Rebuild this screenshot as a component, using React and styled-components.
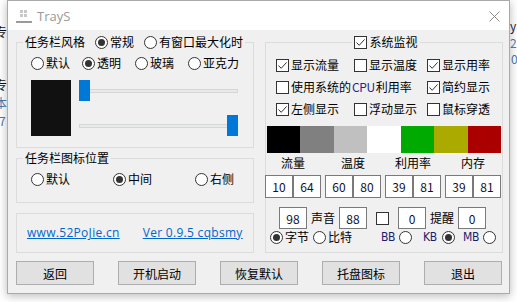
import React from "react";
import styled, { createGlobalStyle } from "styled-components";

const GlobalStyle = createGlobalStyle`
  html, body {
    margin: 0;
    padding: 0;
    background: #fff;
  }
  body {
    width: 517px;
    height: 302px;
    overflow: hidden;
    font-family: "Noto Sans CJK SC", "Noto Sans", sans-serif;
    font-size: 12px;
    color: #000;
  }
`;

const Desktop = styled.div`
  display: flex;
  align-items: flex-start;
  width: 517px;
  height: 302px;
  overflow: hidden;
`;

const Strip = styled.div`
  flex: none;
  width: 7px;
  height: 302px;
  overflow: hidden;
  display: flex;
  flex-direction: column;
`;

const StripLine = styled.div`
  white-space: nowrap;
  line-height: 13px;
  height: 13px;
  font-size: 12px;
  margin-top: ${(p) => p.$mt}px;
  margin-left: ${(p) => p.$ml}px;
  color: ${(p) => p.$color};
`;

const Window = styled.div`
  flex: none;
  position: relative;
  z-index: 1;
  width: 503px;
  height: 294px;
  box-sizing: border-box;
  border: 1px solid #aaaaaa;
  background: #f0f0f0;
  box-shadow: 0 2px 9px rgba(0, 0, 0, 0.28);
  display: flex;
  flex-direction: column;
`;

const TitleBar = styled.div`
  height: 29px;
  flex: none;
  background: #fff;
  display: flex;
  align-items: center;
  padding: 0 9px 0 8px;
`;

const Title = styled.span`
  margin-left: 5px;
  font-family: "Open Sans", "Noto Sans", sans-serif;
  font-size: 13px;
  color: #9a9a9a;
`;

const CloseBtn = styled.svg`
  margin-left: auto;
  margin-top: 1px;
`;

const Body = styled.div`
  flex: 1;
  padding: 12px 6px 0 8px;
  display: flex;
  flex-direction: column;
`;

const Panels = styled.div`
  display: flex;
  gap: 11px;
  height: 211px;
`;

const Column = styled.div`
  width: 238px;
  display: flex;
  flex-direction: column;
  gap: 10px;
`;

const Group = styled.div`
  position: relative;
  box-sizing: border-box;
  width: 238px;
  height: ${(p) => p.$h}px;
  border: 1px solid #dcdcdc;
  padding: ${(p) => p.$pad};
  display: flex;
  flex-direction: column;
`;

const LegendBar = styled.div`
  position: absolute;
  top: -9px;
  left: ${(p) => (p.$center ? 0 : 6)}px;
  right: ${(p) => (p.$center ? 0 : "auto")};
  display: flex;
  justify-content: ${(p) => (p.$center ? "center" : "flex-start")};
`;

const Legend = styled.div`
  display: flex;
  align-items: center;
  gap: 10px;
  height: 16px;
  line-height: 16px;
  padding: 0 2px;
  margin-left: ${(p) => p.$ml || 0}px;
  background: #f0f0f0;
`;

const RadioLabel = styled.label`
  flex: none;
  display: inline-flex;
  align-items: center;
  gap: 2px;
  height: 16px;
  line-height: 16px;
  width: ${(p) => (p.$w ? `${p.$w}px` : "auto")};
`;

const RadioCircle = styled.span`
  flex: none;
  width: 13px;
  height: 13px;
  box-sizing: border-box;
  border: 1px solid #333;
  border-radius: 50%;
  background: #fff;
  display: flex;
  align-items: center;
  justify-content: center;
  &::after {
    content: "";
    width: 7px;
    height: 7px;
    border-radius: 50%;
    background: #333;
    display: ${(p) => (p.$on ? "block" : "none")};
  }
`;

const CheckLabel = styled.label`
  display: inline-flex;
  align-items: center;
  gap: 2px;
  height: 16px;
  line-height: 16px;
  white-space: nowrap;
  grid-column: ${(p) => (p.$span ? `span ${p.$span}` : "auto")};
`;

const CheckBox = styled.span`
  flex: none;
  width: 13px;
  height: 13px;
  box-sizing: border-box;
  border: 1px solid #333;
  background: #fff;
  display: flex;
  align-items: center;
  justify-content: center;
  margin-left: ${(p) => p.$ml || 0}px;
`;

const Latin = styled.span`
  color: #1d2a8c;
  letter-spacing: -0.4px;
  margin: 0 -1px;
`;

const RadioRow = styled.div`
  display: flex;
  align-items: center;
  height: 16px;
`;

const SwatchBlock = styled.div`
  display: flex;
  gap: 8px;
  margin-top: 9px;
`;

const BigSwatch = styled.div`
  width: 40px;
  height: 56px;
  background: #111;
`;

const Sliders = styled.div`
  display: flex;
  flex-direction: column;
  gap: 14px;
`;

const SliderBox = styled.div`
  position: relative;
  width: 159px;
  height: 21px;
`;

const Track = styled.div`
  position: absolute;
  left: 0;
  right: 0;
  top: 9px;
  height: 4px;
  box-sizing: border-box;
  background: #e7eaea;
  border: 1px solid #d6d6d6;
`;

const Thumb = styled.div`
  position: absolute;
  top: 0;
  width: 11px;
  height: 21px;
  background: #0078d7;
`;

const LinkRow = styled.div`
  display: flex;
  align-items: center;
  gap: 23px;
  height: 16px;
`;

const Link = styled.a`
  font-family: "Open Sans", "Noto Sans", sans-serif;
  font-size: 12px;
  letter-spacing: 0.3px;
  line-height: 16px;
  color: #0066cc;
  text-decoration: underline;
  white-space: nowrap;
`;

const CheckGrid = styled.div`
  display: grid;
  grid-template-columns: 78px 73px auto;
  grid-auto-rows: 22px;
  align-items: center;
  margin: 11px 0 0 10px;
`;

const ColorStrip = styled.div`
  display: flex;
  height: 27px;
  margin: 6px 1px 0 1px;
`;

const ColorCell = styled.div`
  flex: 1;
  background: ${(p) => p.$c};
`;

const PairGrid = styled.div`
  display: grid;
  grid-template-columns: repeat(4, 56px);
  column-gap: 4px;
  margin: ${(p) => p.$m};
`;

const PairLabel = styled.div`
  text-align: center;
  line-height: 16px;
  height: 16px;
`;

const Pair = styled.div`
  display: flex;
`;

const NumBox = styled.div`
  flex: none;
  width: 28px;
  height: ${(p) => p.$h}px;
  box-sizing: border-box;
  border: 1px solid #7a7a7a;
  background: #fff;
  display: flex;
  align-items: center;
  justify-content: center;
  margin-left: ${(p) => p.$ml || 0}px;
  font-size: 12px;
  color: #101030;
`;

const MiscRow = styled.div`
  display: flex;
  align-items: center;
  height: 22px;
  margin: 9px 0 0 13px;
`;

const Word = styled.span`
  margin-left: ${(p) => p.$ml || 0}px;
  line-height: 16px;
`;

const UnitRow = styled.div`
  display: flex;
  align-items: center;
  height: 16px;
  padding: 0 6px 0 4px;
`;

const UnitItem = styled.label`
  display: flex;
  align-items: center;
  justify-content: space-between;
  width: ${(p) => p.$w}px;
  margin-left: ${(p) => (p.$ml === "auto" ? "auto" : `${p.$ml}px`)};
`;

const UnitText = styled.span`
  font-family: "Liberation Sans Narrow", "DejaVu Sans Condensed", "Liberation Sans", sans-serif;
  font-size: 12px;
  letter-spacing: -0.3px;
  color: #1c1c6e;
`;

const ButtonRow = styled.div`
  display: flex;
  justify-content: space-between;
  width: 486px;
  margin-top: 8px;
`;

const Button = styled.button`
  width: 78px;
  height: 24px;
  box-sizing: border-box;
  border: 1px solid #adadad;
  background: #e1e1e1;
  font-family: "Noto Sans CJK SC", sans-serif;
  font-size: 12px;
  color: #000;
  padding: 0;
`;

const Radio = ({ on, children, w }) => (
  <RadioLabel $w={w}>
    <RadioCircle $on={on} />
    {children}
  </RadioLabel>
);

const Tick = () => (
  <svg width="11" height="11" viewBox="0 0 11 11">
    <polyline points="1.5,5.5 4.2,8.3 9.6,2.4" fill="none" stroke="#333" strokeWidth="1" />
  </svg>
);

const Check = ({ on, children, span }) => (
  <CheckLabel $span={span}>
    <CheckBox>{on && <Tick />}</CheckBox>
    {children}
  </CheckLabel>
);

const Slider = ({ value }) => (
  <SliderBox>
    <Track />
    <Thumb style={{ left: Math.round(value * 148) }} />
  </SliderBox>
);

const colors = ["#000000", "#808080", "#c0c0c0", "#ffffff", "#00aa00", "#aaaa00", "#aa0000"];
const pairs = [
  ["流量", "10", "64"],
  ["温度", "60", "80"],
  ["利用率", "39", "81"],
  ["内存", "39", "81"],
];
const buttons = ["返回", "开机启动", "恢复默认", "托盘图标", "退出"];

export default function App() {
  return (
    <>
      <GlobalStyle />
      <Desktop>
        <Strip>
          <StripLine $mt={25} $ml={-5} $color="#111">专</StripLine>
          <StripLine $mt={40} $ml={-5} $color="#111">专</StripLine>
          <StripLine $mt={5} $ml={-5} $color="#4a78b0">本</StripLine>
          <StripLine $mt={5} $ml={-1} $color="#4a78b0">7</StripLine>
        </Strip>

        <Window>
          <TitleBar>
            <svg width="16" height="16" viewBox="0 0 16 16">
              <rect x="4" y="2" width="3" height="3" fill="#c8c8c8" />
              <rect x="8" y="2" width="3" height="3" fill="#c8c8c8" />
              <rect x="4" y="6" width="3" height="3" fill="#c8c8c8" />
              <rect x="8" y="6" width="3" height="3" fill="#c8c8c8" />
              <rect x="0" y="13" width="16" height="2" fill="#9a9a9a" />
            </svg>
            <Title>TrayS</Title>
            <CloseBtn width="11" height="11" viewBox="0 0 11 11">
              <path d="M0.5 0.5 L10.5 10.5 M10.5 0.5 L0.5 10.5" stroke="#8a8a8a" strokeWidth="1" />
            </CloseBtn>
          </TitleBar>

          <Body>
            <Panels>
              <Column>
                <Group $h={106} $pad="12px 0 0 14px">
                  <LegendBar>
                    <Legend>
                      <span>任务栏风格</span>
                      <Radio on>常规</Radio>
                      <Radio>有窗口最大化时</Radio>
                    </Legend>
                  </LegendBar>
                  <RadioRow>
                    <Radio w={51}>默认</Radio>
                    <Radio w={53} on>透明</Radio>
                    <Radio w={53}>玻璃</Radio>
                    <Radio>亚克力</Radio>
                  </RadioRow>
                  <SwatchBlock>
                    <BigSwatch />
                    <Sliders>
                      <Slider value={0} />
                      <Slider value={1} />
                    </Sliders>
                  </SwatchBlock>
                </Group>

                <Group $h={45} $pad="12px 0 0 14px">
                  <LegendBar>
                    <Legend>
                      <span>任务栏图标位置</span>
                    </Legend>
                  </LegendBar>
                  <RadioRow>
                    <Radio w={82}>默认</Radio>
                    <Radio w={82} on>中间</Radio>
                    <Radio>右侧</Radio>
                  </RadioRow>
                </Group>

                <Group $h={40} $pad="11px 0 0 10px">
                  <LinkRow>
                    <Link>www.52PoJie.cn</Link>
                    <Link>Ver 0.9.5 cqbsmy</Link>
                  </LinkRow>
                </Group>
              </Column>

              <Group $h={211} $pad="0">
                <LegendBar $center>
                  <Legend $ml={4}>
                    <Check on>系统监视</Check>
                  </Legend>
                </LegendBar>
                <CheckGrid>
                  <Check on>显示流量</Check>
                  <Check>显示温度</Check>
                  <Check on>显示用率</Check>
                  <Check span={2}>
                    使用系统的<Latin>CPU</Latin>利用率
                  </Check>
                  <Check on>简约显示</Check>
                  <Check on>左侧显示</Check>
                  <Check>浮动显示</Check>
                  <Check>鼠标穿透</Check>
                </CheckGrid>

                <ColorStrip>
                  {colors.map((c) => (
                    <ColorCell key={c} $c={c} />
                  ))}
                </ColorStrip>

                <PairGrid $m="2px 0 0 -1px">
                  {pairs.map(([label]) => (
                    <PairLabel key={label}>{label}</PairLabel>
                  ))}
                </PairGrid>
                <PairGrid $m="4px 0 0 -1px">
                  {pairs.map(([label, a, b]) => (
                    <Pair key={label}>
                      <NumBox $h={23}>{a}</NumBox>
                      <NumBox $h={23}>{b}</NumBox>
                    </Pair>
                  ))}
                </PairGrid>

                <MiscRow>
                  <NumBox $h={22}>98</NumBox>
                  <Word $ml={4}>声音</Word>
                  <NumBox $h={22} $ml={4}>88</NumBox>
                  <CheckBox $ml={9} />
                  <NumBox $h={22} $ml={9}>0</NumBox>
                  <Word $ml={4}>提醒</Word>
                  <NumBox $h={22} $ml={4}>0</NumBox>
                </MiscRow>

                <UnitRow>
                  <Radio w={43} on>字节</Radio>
                  <Radio>比特</Radio>
                  <UnitItem $w={31} $ml="auto">
                    <UnitText>BB</UnitText>
                    <RadioCircle />
                  </UnitItem>
                  <UnitItem $w={32} $ml={11}>
                    <UnitText>KB</UnitText>
                    <RadioCircle $on />
                  </UnitItem>
                  <UnitItem $w={33} $ml={8}>
                    <UnitText>MB</UnitText>
                    <RadioCircle />
                  </UnitItem>
                </UnitRow>
              </Group>
            </Panels>

            <ButtonRow>
              {buttons.map((b) => (
                <Button key={b}>{b}</Button>
              ))}
            </ButtonRow>
          </Body>
        </Window>

        <Strip>
          <StripLine $mt={19} $ml={0} $color="#1a1a4a">
            y<span style={{ color: "#c04040" }}>S</span>
          </StripLine>
          <StripLine $mt={4} $ml={0} $color="#5a7ab0">20</StripLine>
          <StripLine $mt={3} $ml={1} $color="#4a78b0">0</StripLine>
        </Strip>
      </Desktop>
    </>
  );
}
